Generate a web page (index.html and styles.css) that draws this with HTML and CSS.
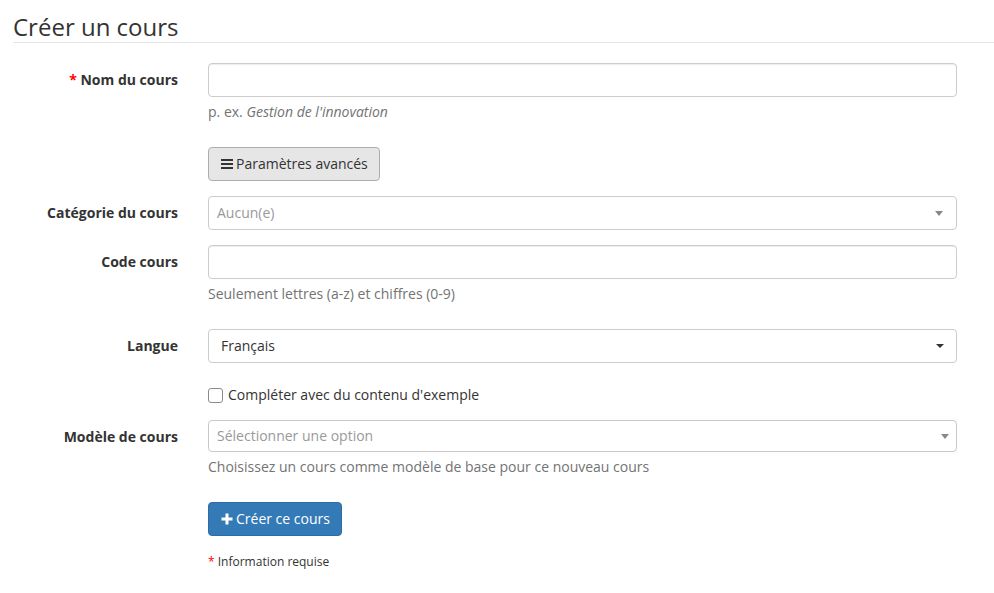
FILE: index.html
```html
<!DOCTYPE html>
<html lang="fr">
<head>
<meta charset="utf-8">
<title>Créer un cours</title>
<link rel="stylesheet" href="styles.css">
</head>
<body>
<div class="page">
  <h2 class="page-title">Créer un cours</h2>
  <form class="form">
    <div class="form-group">
      <label class="control-label"><span class="req">*</span> Nom du cours</label>
      <div class="field">
        <input class="form-control" type="text">
        <p class="help">p. ex. <em>Gestion de l'innovation</em></p>
      </div>
    </div>

    <div class="form-group">
      <div></div>
      <div class="field">
        <button type="button" class="btn btn-default">
          <svg class="ico" width="12" height="12" viewBox="0 0 12 12"><rect x="0" y="1" width="12" height="2" fill="#333"/><rect x="0" y="5" width="12" height="2" fill="#333"/><rect x="0" y="9" width="12" height="2" fill="#333"/></svg>
          Paramètres avancés
        </button>
      </div>
    </div>

    <div class="form-group">
      <label class="control-label">Catégorie du cours</label>
      <div class="field">
        <div class="select select-cat">
          <span class="placeholder">Aucun(e)</span>
          <span class="arrow arrow-light"></span>
        </div>
      </div>
    </div>

    <div class="form-group">
      <label class="control-label">Code cours</label>
      <div class="field">
        <input class="form-control" type="text">
        <p class="help">Seulement lettres (a-z) et chiffres (0-9)</p>
      </div>
    </div>

    <div class="form-group">
      <label class="control-label">Langue</label>
      <div class="field">
        <div class="select select-lang">
          <span>Français</span>
          <span class="arrow arrow-dark"></span>
        </div>
      </div>
    </div>

    <div class="form-group">
      <div></div>
      <div class="field">
        <label class="checkbox"><span class="box"></span>Compléter avec du contenu d'exemple</label>
      </div>
    </div>

    <div class="form-group">
      <label class="control-label">Modèle de cours</label>
      <div class="field">
        <div class="select select2">
          <span class="placeholder">Sélectionner une option</span>
          <span class="arrow arrow-light"></span>
        </div>
        <p class="help">Choisissez un cours comme modèle de base pour ce nouveau cours</p>
      </div>
    </div>

    <div class="form-group">
      <div></div>
      <div class="field">
        <button type="button" class="btn btn-primary">
          <svg class="ico" width="12" height="12" viewBox="0 0 12 12"><rect x="4.5" y="0.5" width="3" height="11" fill="#fff"/><rect x="0.5" y="4.5" width="11" height="3" fill="#fff"/></svg>
          Créer ce cours
        </button>
      </div>
    </div>

    <div class="form-group">
      <div></div>
      <div class="field">
        <span class="small"><span class="req">*</span> Information requise</span>
      </div>
    </div>
  </form>
</div>
</body>
</html>
```

FILE: styles.css
```css
* { box-sizing: border-box; }
html, body { margin: 0; padding: 0; background: #fff; }
body {
  font-family: "Open Sans", "Liberation Sans", sans-serif;
  font-size: 14px;
  line-height: 20px;
  color: #333;
}
.page { padding: 14px 0 0 13px; }
.page-title {
  margin: 0 0 20px 0;
  padding-bottom: 2px;
  font-size: 24px;
  line-height: 26.4px;
  font-weight: 400;
  border-bottom: 1px solid #e5e5e5;
}
.form-group {
  display: grid;
  grid-template-columns: 165px 749px;
  column-gap: 30px;
  margin-bottom: 15px;
}
.control-label {
  text-align: right;
  font-weight: 700;
  padding-top: 7px;
  line-height: 20px;
}
.req { color: #f00; }
.form-control {
  display: block;
  width: 100%;
  height: 34px;
  padding: 6px 12px;
  border: 1px solid #ccc;
  border-radius: 4px;
  box-shadow: inset 0 1px 1px rgba(0,0,0,.075);
  font: inherit;
  color: #555;
  background: #fff;
}
.help { margin: 5px 0 10px; color: #737373; }
.btn {
  display: inline-flex;
  align-items: center;
  gap: 3px;
  height: 34px;
  padding: 6px 11px 6px 12px;
  font: inherit;
  border-radius: 4px;
  cursor: pointer;
}
.btn-default { background: #e6e6e6; border: 1px solid #adadad; color: #333; }
.btn-primary { background: #337ab7; border: 1px solid #2e6da4; color: #fff; }
.ico { display: block; }
.select {
  position: relative;
  display: flex;
  align-items: center;
  width: 100%;
  background: #fff;
  border-radius: 4px;
}
.select-cat { height: 34px; border: 1px solid #ccc; padding-left: 8px; }
.select-lang { height: 34px; border: 1px solid #ccc; padding-left: 12px; }
.select2 { height: 32px; border: 1px solid #c8c8c8; padding-left: 8px; }
.placeholder { color: #999; }
.arrow {
  position: absolute;
  top: 50%;
  width: 0; height: 0;
  border-left: 4px solid transparent;
  border-right: 4px solid transparent;
  margin-top: -2px;
}
.select-cat .arrow { right: 13px; }
.select-lang .arrow { right: 12px; }
.select2 .arrow { right: 7px; }
.arrow-light { border-top: 5px solid #888; }
.arrow-dark { border-top: 4px solid #333; }
.checkbox {
  display: flex;
  align-items: center;
  padding-top: 7px;
  min-height: 27px;
  line-height: 20px;
}
.box {
  width: 15px; height: 15px;
  border: 1px solid #8a8a8a;
  border-radius: 3px;
  margin-right: 5px;
  background: #fff;
}
.small { font-size: 12px; line-height: 20px; }
```
